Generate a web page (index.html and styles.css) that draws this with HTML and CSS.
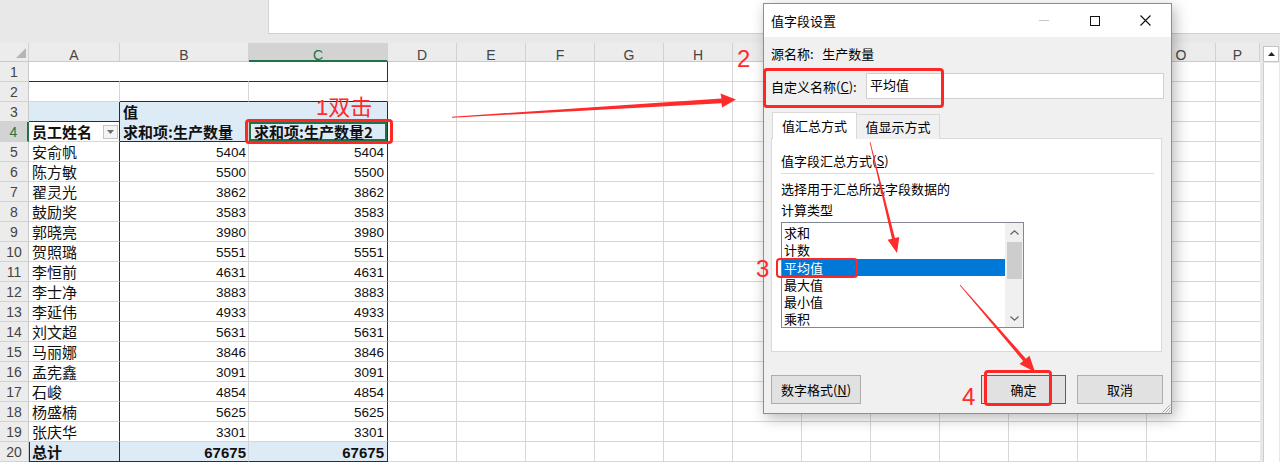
FILE: index.html
```html
<!DOCTYPE html>
<html lang="zh-CN">
<head>
<meta charset="utf-8">
<title>值字段设置</title>
<link rel="stylesheet" href="styles.css">
</head>
<body>
<div class="app">
  <div class="topband"><div class="formula"></div></div>
  <div class="sheet">
    <div class="grid">
      <div class="row hdr">
        <div class="corner"><svg width="12" height="12" viewBox="0 0 12 12"><path d="M11 1V11H1Z" fill="#b5b5b5"/></svg></div>
        <div class="ch">A</div><div class="ch">B</div><div class="ch sel">C</div>
        <div class="ch">D</div><div class="ch">E</div><div class="ch">F</div><div class="ch">G</div><div class="ch">H</div><div class="ch">I</div><div class="ch">J</div><div class="ch">K</div><div class="ch">L</div><div class="ch">M</div><div class="ch">N</div><div class="ch">O</div><div class="ch">P</div>
      </div>
      <div class="row"><div class="rh">1</div><div class="c nv bb"></div><div class="c nv bb"></div><div class="c br bb"></div><div class="rest"></div></div>
      <div class="row"><div class="rh">2</div><div class="c"></div><div class="c bb"></div><div class="c bb"></div><div class="rest"></div></div>
      <div class="row"><div class="rh">3</div><div class="c fill br bb"></div><div class="c fill fr fb bold">值</div><div class="c fill br fb"></div><div class="rest"></div></div>
      <div class="row"><div class="rh sel">4</div><div class="c namehd br"><span class="bold">员工姓名</span><span class="filt"><svg width="7" height="4" viewBox="0 0 7 4"><path d="M0 0H7L3.5 4Z" fill="#6d6d6d"/></svg></span></div><div class="c fill bb bold">求和项:生产数量</div><div class="c fill br bb bold act">求和项:生产数量2</div><div class="rest"></div></div>
      <div class="row"><div class="rh">5</div><div class="c br">安俞帆</div><div class="c num nb">5404</div><div class="c num nc br">5404</div><div class="rest"></div></div>
      <div class="row"><div class="rh">6</div><div class="c br">陈方敏</div><div class="c num nb">5500</div><div class="c num nc br">5500</div><div class="rest"></div></div>
      <div class="row"><div class="rh">7</div><div class="c br">翟灵光</div><div class="c num nb">3862</div><div class="c num nc br">3862</div><div class="rest"></div></div>
      <div class="row"><div class="rh">8</div><div class="c br">鼓励奖</div><div class="c num nb">3583</div><div class="c num nc br">3583</div><div class="rest"></div></div>
      <div class="row"><div class="rh">9</div><div class="c br">郭晓亮</div><div class="c num nb">3980</div><div class="c num nc br">3980</div><div class="rest"></div></div>
      <div class="row"><div class="rh">10</div><div class="c br">贺照璐</div><div class="c num nb">5551</div><div class="c num nc br">5551</div><div class="rest"></div></div>
      <div class="row"><div class="rh">11</div><div class="c br">李恒前</div><div class="c num nb">4631</div><div class="c num nc br">4631</div><div class="rest"></div></div>
      <div class="row"><div class="rh">12</div><div class="c br">李士净</div><div class="c num nb">3883</div><div class="c num nc br">3883</div><div class="rest"></div></div>
      <div class="row"><div class="rh">13</div><div class="c br">李延伟</div><div class="c num nb">4933</div><div class="c num nc br">4933</div><div class="rest"></div></div>
      <div class="row"><div class="rh">14</div><div class="c br">刘文超</div><div class="c num nb">5631</div><div class="c num nc br">5631</div><div class="rest"></div></div>
      <div class="row"><div class="rh">15</div><div class="c br">马丽娜</div><div class="c num nb">3846</div><div class="c num nc br">3846</div><div class="rest"></div></div>
      <div class="row"><div class="rh">16</div><div class="c br">孟宪鑫</div><div class="c num nb">3091</div><div class="c num nc br">3091</div><div class="rest"></div></div>
      <div class="row"><div class="rh">17</div><div class="c br">石峻</div><div class="c num nb">4854</div><div class="c num nc br">4854</div><div class="rest"></div></div>
      <div class="row"><div class="rh">18</div><div class="c br">杨盛楠</div><div class="c num nb">5625</div><div class="c num nc br">5625</div><div class="rest"></div></div>
      <div class="row"><div class="rh">19</div><div class="c br">张庆华</div><div class="c num nb">3301</div><div class="c num nc br">3301</div><div class="rest"></div></div>
      <div class="row"><div class="rh">20</div><div class="c fill br bb bold totl">总计</div><div class="c fill bb num nb tot">67675</div><div class="c fill br bb num nc tot">67675</div><div class="rest"></div></div>
    </div>
    <div class="vscroll">
      <div class="vs-up"><svg width="7" height="4" viewBox="0 0 7 4"><path d="M0 4H7L3.5 0Z" fill="#222"/></svg></div>
      <div class="vs-track"></div>
    </div>
  </div>

  <div class="dialog">
    <div class="dtitle">
      <span class="dt">值字段设置</span>
      <div class="caps">
        <span class="cap"><svg width="10" height="1" viewBox="0 0 10 1"><rect width="10" height="1" fill="#c6c6c6"/></svg></span>
        <span class="cap"><svg width="10" height="10" viewBox="0 0 10 10"><rect x="0.5" y="0.5" width="9" height="9" fill="none" stroke="#111"/></svg></span>
        <span class="cap"><svg width="11" height="11" viewBox="0 0 11 11"><path d="M0.5 0.5L10.5 10.5M10.5 0.5L0.5 10.5" stroke="#111" stroke-width="1.1"/></svg></span>
      </div>
    </div>
    <div class="dbody">
      <div class="srcrow">源名称:   生产数量</div>
      <div class="namerow"><label>自定义名称(<u>C</u>):</label><div class="edit">平均值</div></div>
      <div class="tabs"><div class="tab on">值汇总方式</div><div class="tab">值显示方式</div></div>
      <div class="panel">
        <div class="ph">值字段汇总方式(<u>S</u>)</div>
        <div class="sep"></div>
        <p class="first">选择用于汇总所选字段数据的</p>
        <p>计算类型</p>
        <div class="list">
          <div class="items">
            <div>求和</div>
            <div>计数</div>
            <div class="on">平均值</div>
            <div>最大值</div>
            <div>最小值</div>
            <div>乘积</div>
          </div>
          <div class="lscroll">
            <div class="lsu"><svg width="9" height="5" viewBox="0 0 9 5"><path d="M0.5 4.5L4.5 0.8L8.5 4.5" fill="none" stroke="#5f5f5f" stroke-width="1.2"/></svg></div>
            <div class="thumb"></div>
            <div class="lspace"></div>
            <div class="lsd"><svg width="9" height="5" viewBox="0 0 9 5"><path d="M0.5 0.5L4.5 4.2L8.5 0.5" fill="none" stroke="#5f5f5f" stroke-width="1.2"/></svg></div>
          </div>
        </div>
      </div>
      <div class="btns">
        <button class="b1">数字格式(<u>N</u>)</button>
        <div class="rbtns"><button class="def">确定</button><button class="cancel">取消</button></div>
      </div>
      <svg class="grip" width="10" height="10" viewBox="0 0 10 10"><path d="M9.5 1.5L1.5 9.5M9.5 4.5L4.5 9.5M9.5 7.5L7.5 9.5" stroke="#a8a8a8" stroke-width="1"/></svg>
    </div>
  </div>

  <svg class="marks" width="1280" height="462" viewBox="0 0 1280 462">
    <polygon points="452,116.7 721.5,98.4 720.5,93.5 736,99.6 722,107.5 721.5,103.2 452,117.7" fill="#ff2a2a"/>
    <polygon points="870.4,141.9 894.9,238.05 899.3,237 897,253 887.6,239.8 892,238.75 869.6,142.1" fill="#ff2a2a"/>
    <polygon points="960.3,284.74 1025.9,358.76 1029.5,355.66 1035,372 1019.6,364.1 1023.2,361.04 959.7,285.26" fill="#ff2a2a"/>
  </svg>
  <div class="redbox rb1"></div>
  <div class="redbox rb2"></div>
  <div class="redbox rb3"></div>
  <div class="redbox rb4"></div>
  <span class="note n1">1双击</span>
  <span class="note n2">2</span>
  <span class="note n3">3</span>
  <span class="note n4">4</span>
</div>
</body>
</html>
```
FILE: styles.css
```css
* { box-sizing: border-box; margin: 0; padding: 0; }
html, body { width: 1280px; height: 462px; overflow: hidden; background: #fff; }
body { font-family: "Noto Sans CJK SC", "Liberation Sans", sans-serif; }
.app { position: relative; width: 1280px; height: 462px; overflow: hidden; }

.topband { height: 43px; background: #e8e8e8; display: flex; align-items: flex-start; }
.formula { margin-left: 268px; flex: 1; height: 34px; background: #fff; border-left: 1px solid #d4d4d4; border-bottom: 1px solid #d0d0d0; }

.sheet { display: flex; height: 419px; }
.grid { width: 1260px; }
.row { display: grid; grid-template-columns: 29px 91px 129px 139px 1fr; height: 20px; }
.row > div { border-right: 1px solid #d6d6d6; border-bottom: 1px solid #d6d6d6; overflow: hidden; white-space: nowrap; }
.row.hdr { grid-template-columns: 29px 91px 129px 139px repeat(12, 69px) 1fr; height: 19px; background: #ececec; }
.row.hdr > div { border-right-color: #d2d2d2; border-bottom-color: #c9c9c9; }
.corner { display: flex; align-items: flex-end; justify-content: flex-end; padding: 0 1px 2px 0; }
.ch { font-family: "Liberation Sans", sans-serif; font-size: 14px; line-height: 25px; color: #444; text-align: center; }
.row.hdr > .ch.sel { background: #d3d3d3; color: #217346; border-bottom: 2px solid #217346; }

.row > .rh { background: #ececec; border-right-color: #c9c9c9; border-bottom-color: #d2d2d2; font-family: "Liberation Sans", sans-serif; font-size: 14px; line-height: 21px; color: #444; text-align: center; }
.row > .rh.sel { background: #d3d3d3; color: #217346; border-right: 2px solid #217346; }

.c { font-size: 15px; line-height: 19px; padding: 0 3px; color: #111; }
.num { font-family: "Liberation Sans", sans-serif; font-size: 13.5px; line-height: 21px; text-align: right; }
.nb { padding-right: 2px; }
.nc { padding-right: 3px; }
.fill { background: #ddebf7; }
.bold { font-weight: 700; }
.tot { font-size: 15px; font-weight: 700; }
.row > .br { border-right-color: #1717d4; }
.row > .bb { border-bottom-color: #1717d4; }
.row > .nv { border-right-color: #fff; }
.row > .fr { border-right-color: #ddebf7; }
.row > .fb { border-bottom-color: #ddebf7; }
.totl { box-shadow: inset 1px 0 0 #1717d4; }
.act { box-shadow: inset 0 0 0 2px #217346; padding-left: 5px; }
.namehd { display: flex; align-items: center; justify-content: space-between; padding: 0 1px 0 3px; }
.filt { width: 15px; height: 14px; border: 1px solid #c4c4c4; background: #f4f4f4; display: flex; align-items: center; justify-content: center; }
.row > .rest { border-right: none; background: repeating-linear-gradient(90deg, transparent 0 68px, #d6d6d6 68px 69px); }

.vscroll { width: 20px; background: #e8e8e8; display: flex; flex-direction: column; padding: 3px 1px 0 3px; }
.vs-up { height: 16px; background: #fff; border: 1px solid #c4c4c4; display: flex; align-items: center; justify-content: center; }
.vs-track { flex: 1; background: #fff; border-left: 1px solid #cfcfcf; margin-top: 1px; }

/* dialog */
.dialog { position: absolute; left: 763px; top: 3px; width: 409px; height: 411px; background: #f0f0f0; border: 1px solid #8e8e8e; box-shadow: 3px 4px 14px rgba(0,0,0,0.28); font-family: "Noto Sans CJK SC", sans-serif; font-size: 13px; color: #000; display: flex; flex-direction: column; }
.dtitle { height: 33px; background: #fff; display: flex; align-items: center; padding-left: 7px; flex: none; }
.dt { flex: 1; line-height: 33px; }
.caps { display: flex; height: 100%; }
.cap { width: 51px; display: flex; align-items: center; justify-content: center; }
.dbody { flex: 1; padding: 0 7px; display: flex; flex-direction: column; position: relative; }
.srcrow { margin-top: 7px; height: 20px; line-height: 20px; white-space: pre; }
.namerow { margin-top: 9px; display: flex; align-items: center; height: 26px; }
.namerow label { width: 95px; }
.edit { flex: 1; height: 26px; background: #fff; border: 1px solid #d0d0d0; padding: 0 3px; line-height: 22px; }
.tabs { margin-top: 13px; display: flex; align-items: flex-end; height: 27px; margin-bottom: -1px; position: relative; z-index: 1; padding-left: 1px; }
.tab { height: 25px; line-height: 24px; width: 83px; text-align: center; border: 1px solid #d9d9d9; border-left: none; border-bottom: none; background: #f0f0f0; }
.tab.on { height: 27px; width: 85px; line-height: 25px; background: #fff; border-left: 1px solid #d9d9d9; }
.panel { height: 214px; background: #fff; border: 1px solid #d9d9d9; margin-right: 2px; padding: 12px 7px 0 9px; }
.ph { line-height: 20px; }
.sep { height: 1px; background: #dcdcdc; margin-top: 2px; }
.panel p { line-height: 21px; }
.panel p.first { margin-top: 4px; }
.list { margin-top: 2px; width: 243px; height: 106px; border: 1px solid #828790; display: flex; background: #fff; }
.items { flex: 1; padding-top: 1px; }
.items div { height: 17.3px; line-height: 17.3px; padding-left: 2px; }
.items div.on { background: #0078d7; color: #fff; }
.lscroll { width: 18px; background: #f0f0f0; display: flex; flex-direction: column; align-items: center; }
.lsu, .lsd { height: 18px; width: 100%; display: flex; align-items: center; justify-content: center; }
.thumb { width: 15px; height: 37px; margin-top: 1px; background: #cdcdcd; }
.lspace { flex: 1; }
.btns { margin-top: 23px; margin-right: 1px; display: flex; justify-content: space-between; height: 29px; }
.rbtns { display: flex; gap: 11px; }
button { font-family: "Noto Sans CJK SC", sans-serif; font-size: 13px; color: #000; background: #e1e1e1; border: 1px solid #adadad; height: 29px; }
.b1 { width: 90px; }
.def { width: 85px; border-color: #0078d7; }
.cancel { width: 86px; }
.grip { position: absolute; right: 0; bottom: 0; }

/* annotations */
.marks { position: absolute; left: 0; top: 0; pointer-events: none; }
.redbox { position: absolute; border: 3px solid #ff2626; border-radius: 4px; }
.rb1 { left: 245px; top: 119px; width: 148px; height: 25px; }
.rb2 { left: 763px; top: 68px; width: 181px; height: 40px; }
.rb3 { left: 776px; top: 258px; width: 82px; height: 20px; border-width: 2.5px; }
.rb4 { left: 984px; top: 370px; width: 68px; height: 36px; }
.note { position: absolute; color: #ff2a2a; font-family: "Liberation Sans", "Noto Sans CJK SC", sans-serif; font-size: 24px; line-height: 24px; }
.n1 { left: 316px; top: 97px; font-size: 22px; line-height: 22px; }
.n2 { left: 737px; top: 47px; }
.n3 { left: 756px; top: 257px; }
.n4 { left: 962px; top: 385px; }
```
